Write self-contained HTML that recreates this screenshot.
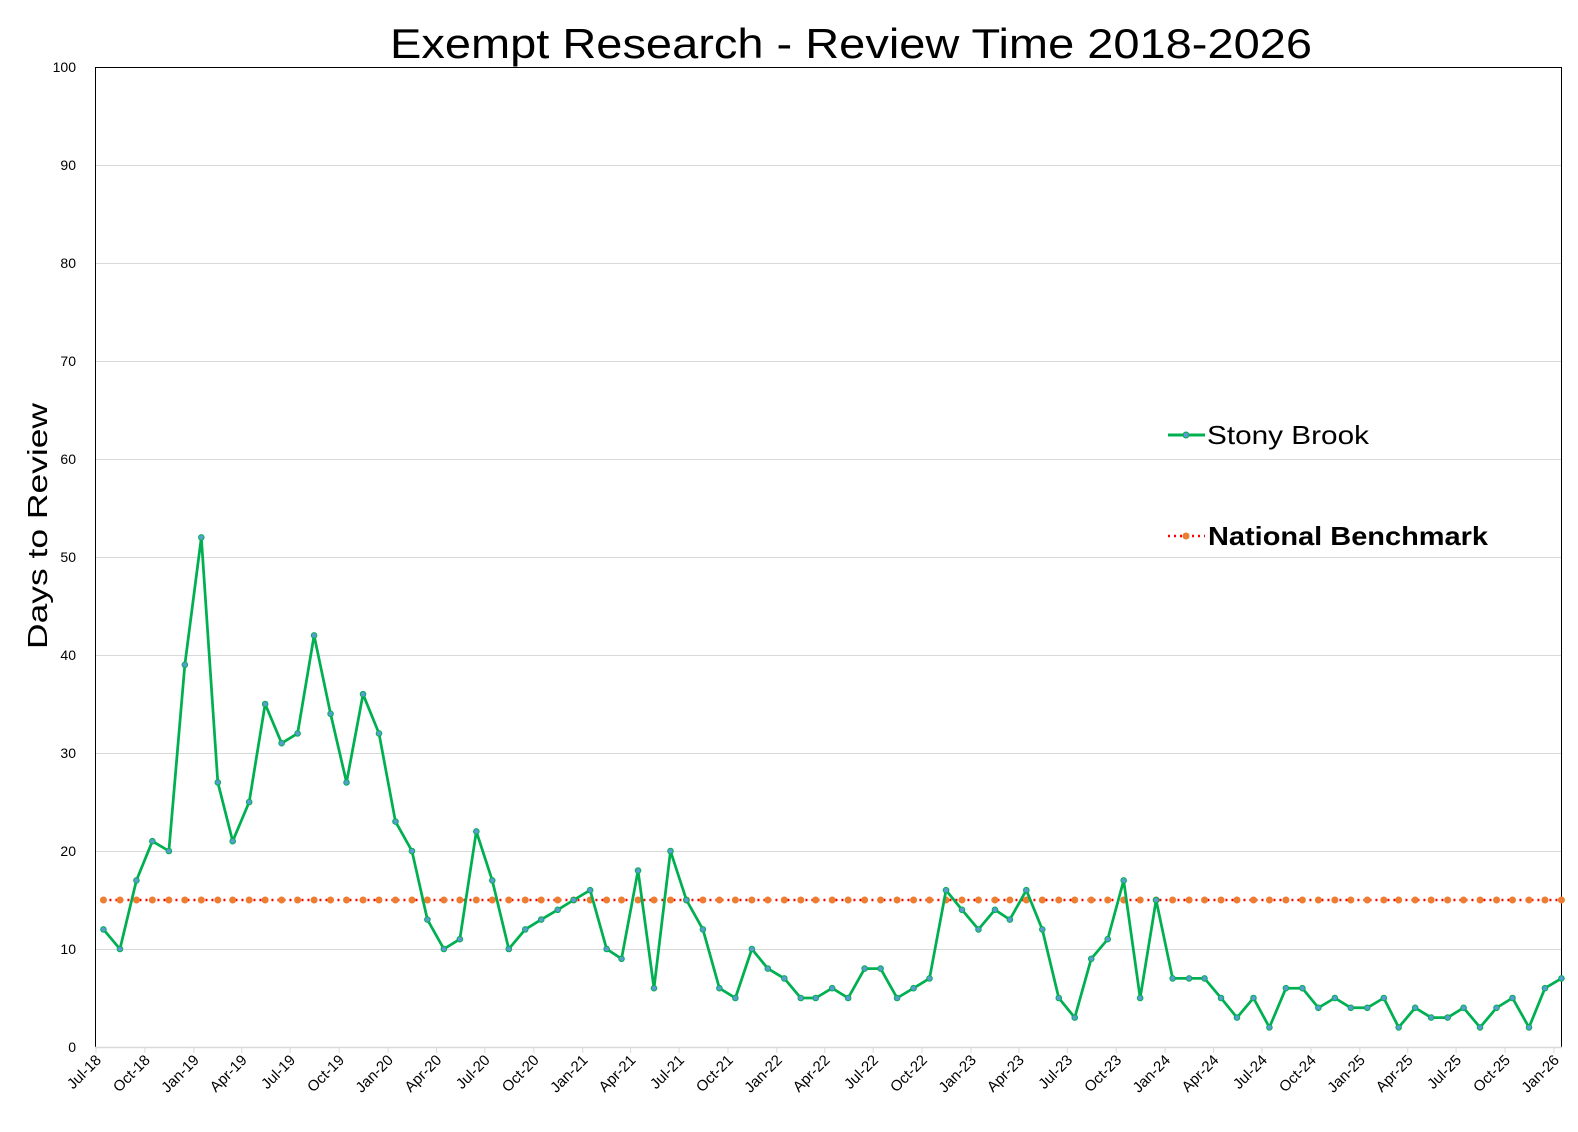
<!DOCTYPE html>
<html><head><meta charset="utf-8">
<style>
html,body{margin:0;padding:0;background:#fff;}
svg{display:block;font-family:"Liberation Sans",sans-serif;}
</style></head>
<body>
<svg id="c" width="1578" height="1132" viewBox="0 0 1578 1132" xmlns="http://www.w3.org/2000/svg">
<rect width="1578" height="1132" fill="#fff"/>
<text x="851" y="58" font-size="42" text-anchor="middle" textLength="922" lengthAdjust="spacingAndGlyphs">Exempt Research - Review Time 2018-2026</text>
<g stroke="#d9d9d9" stroke-width="1">
<line x1="96" y1="949.5" x2="1561" y2="949.5"/><line x1="96" y1="851.5" x2="1561" y2="851.5"/>
<line x1="96" y1="753.5" x2="1561" y2="753.5"/><line x1="96" y1="655.5" x2="1561" y2="655.5"/>
<line x1="96" y1="557.5" x2="1561" y2="557.5"/><line x1="96" y1="459.5" x2="1561" y2="459.5"/>
<line x1="96" y1="361.5" x2="1561" y2="361.5"/><line x1="96" y1="263.5" x2="1561" y2="263.5"/>
<line x1="96" y1="165.5" x2="1561" y2="165.5"/>
</g>
<rect x="95.5" y="67.5" width="1466" height="980" fill="none" stroke="#000" stroke-width="1"/>
<line x1="95" y1="1047.5" x2="1562" y2="1047.5" stroke="#d9d9d9" stroke-width="1.5"/>
<g id="ticks" stroke="#d9d9d9" stroke-width="1"></g>
<g font-size="14" text-anchor="end">
<text x="76" y="1052">0</text><text x="76" y="954">10</text><text x="76" y="856">20</text>
<text x="76" y="758">30</text><text x="76" y="660">40</text><text x="76" y="562">50</text>
<text x="76" y="464">60</text><text x="76" y="366">70</text><text x="76" y="268">80</text>
<text x="76" y="170">90</text><text x="76" y="72">100</text>
</g>
<text transform="translate(47,526) rotate(-90)" font-size="28" text-anchor="middle" textLength="246" lengthAdjust="spacingAndGlyphs">Days to Review</text>
<g id="xl" font-size="15" text-anchor="end">
<text>Jul-18</text><text>Oct-18</text><text>Jan-19</text><text>Apr-19</text><text>Jul-19</text><text>Oct-19</text>
<text>Jan-20</text><text>Apr-20</text><text>Jul-20</text><text>Oct-20</text><text>Jan-21</text><text>Apr-21</text>
<text>Jul-21</text><text>Oct-21</text><text>Jan-22</text><text>Apr-22</text><text>Jul-22</text><text>Oct-22</text>
<text>Jan-23</text><text>Apr-23</text><text>Jul-23</text><text>Oct-23</text><text>Jan-24</text><text>Apr-24</text>
<text>Jul-24</text><text>Oct-24</text><text>Jan-25</text><text>Apr-25</text><text>Jul-25</text><text>Oct-25</text>
<text>Jan-26</text>
</g>
<g id="bench"></g>
<g id="series"></g>
<line x1="1168" y1="435" x2="1205" y2="435" stroke="#00b050" stroke-width="3"/>
<circle cx="1186" cy="435" r="3" fill="#5b9bd5" stroke="#00b050" stroke-width="1"/>
<text x="1207" y="444" font-size="26" textLength="162" lengthAdjust="spacingAndGlyphs">Stony Brook</text>
<line x1="1168" y1="536" x2="1205" y2="536" stroke="#ff0000" stroke-width="2.5" stroke-dasharray="2 4"/>
<circle cx="1186" cy="536" r="3.5" fill="#ed7d31"/>
<text x="1208" y="545" font-size="26" font-weight="bold" textLength="280" lengthAdjust="spacingAndGlyphs">National Benchmark</text>
</svg>
<script>
(function(){
var NS="http://www.w3.org/2000/svg";
var d=[12,10,17,21,20,39,52,27,21,25,35,31,32,42,34,27,36,32,23,20,13,10,11,22,17,10,12,13,14,15,16,10,9,18,6,20,15,12,6,5,10,8,7,5,5,6,5,8,8,5,6,7,16,14,12,14,13,16,12,5,3,9,11,17,5,15,7,7,7,5,3,5,2,6,6,4,5,4,4,5,2,4,3,3,4,2,4,5,2,6,7];
var t0=Date.UTC(2018,6,1), day=86400000, px=(1554-96)/((Date.UTC(2026,0,1)-t0)/day);
function X(y,m,dd){return 96+px*((Date.UTC(y,m,dd)-t0)/day);}
function Y(v){return 1047-9.8*v;}
var ticks=document.getElementById('ticks'), xl=document.getElementById('xl').children;
for(var k=0;k<31;k++){
 var mm=6+3*k, y=2018+Math.floor(mm/12), m=mm%12, x=X(y,m,1);
 var l=document.createElementNS(NS,'line');l.setAttribute('x1',x);l.setAttribute('x2',x);l.setAttribute('y1',1047);l.setAttribute('y2',1053);ticks.appendChild(l);
 xl[k].setAttribute('transform','translate('+(x+6)+',1061) rotate(-45)');
}
var pts=[],bp=[];
for(var i=0;i<d.length;i++){var mm=6+i,y=2018+Math.floor(mm/12),m=mm%12;var x=X(y,m,15);pts.push([x,Y(d[i])]);bp.push(x);}
var b=document.getElementById('bench');
var ln=document.createElementNS(NS,'line');ln.setAttribute('x1',bp[0]);ln.setAttribute('x2',bp[bp.length-1]);ln.setAttribute('y1',Y(15));ln.setAttribute('y2',Y(15));ln.setAttribute('stroke','#ff0000');ln.setAttribute('stroke-width','2.5');ln.setAttribute('stroke-dasharray','2 4');b.appendChild(ln);
bp.forEach(function(x){var c=document.createElementNS(NS,'circle');c.setAttribute('cx',x);c.setAttribute('cy',Y(15));c.setAttribute('r',3.5);c.setAttribute('fill','#ed7d31');b.appendChild(c);});
var s=document.getElementById('series');
var pl=document.createElementNS(NS,'polyline');pl.setAttribute('points',pts.map(function(p){return p[0]+','+p[1];}).join(' '));pl.setAttribute('fill','none');pl.setAttribute('stroke','#00b050');pl.setAttribute('stroke-width','2.75');pl.setAttribute('stroke-linejoin','round');s.appendChild(pl);
pts.forEach(function(p){var c=document.createElementNS(NS,'circle');c.setAttribute('cx',p[0]);c.setAttribute('cy',p[1]);c.setAttribute('r',2.8);c.setAttribute('fill','#5b9bd5');c.setAttribute('stroke','#00b050');c.setAttribute('stroke-width','1');s.appendChild(c);});
})();
</script>
</body></html>
